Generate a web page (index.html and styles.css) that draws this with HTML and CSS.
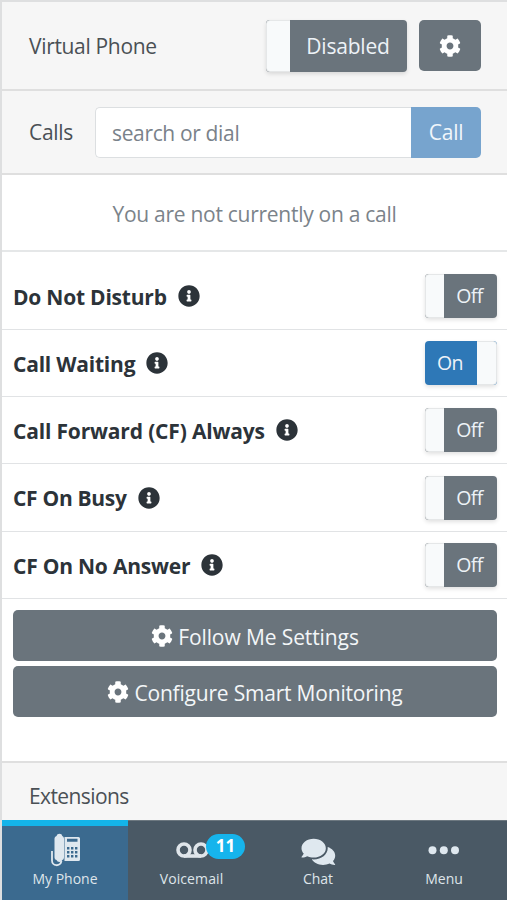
FILE: index.html
```html
<!DOCTYPE html>
<html lang="en">
<head>
<meta charset="utf-8">
<title>My Phone</title>
<link rel="stylesheet" href="styles.css">
</head>
<body>
<svg width="0" height="0" class="defs" aria-hidden="true">
  <symbol id="cog" viewBox="0 0 512 512"><path d="M487.4 315.7l-42.6-24.6c4.3-23.2 4.3-47 0-70.2l42.6-24.6c4.9-2.8 7.1-8.6 5.5-14-11.1-35.6-30-67.8-54.7-94.6-3.8-4.1-10-5.1-14.8-2.3L380.8 110c-17.9-15.4-38.5-27.3-60.8-35.1V25.8c0-5.6-3.9-10.5-9.4-11.7-36.7-8.2-74.3-7.8-109.2 0-5.5 1.2-9.4 6.1-9.4 11.7V75c-22.2 7.9-42.8 19.8-60.8 35.1L88.7 85.5c-4.9-2.8-11-1.9-14.8 2.3-24.7 26.7-43.6 58.9-54.7 94.6-1.7 5.4.6 11.2 5.5 14L67.3 221c-4.3 23.2-4.3 47 0 70.2l-42.6 24.6c-4.9 2.8-7.1 8.6-5.5 14 11.1 35.6 30 67.8 54.7 94.6 3.8 4.1 10 5.1 14.8 2.3l42.6-24.6c17.9 15.4 38.5 27.3 60.8 35.1v49.2c0 5.6 3.9 10.5 9.4 11.7 36.7 8.2 74.3 7.8 109.2 0 5.5-1.2 9.4-6.1 9.4-11.7v-49.2c22.2-7.9 42.8-19.8 60.8-35.1l42.6 24.6c4.9 2.8 11 1.9 14.8-2.3 24.7-26.7 43.6-58.9 54.7-94.6 1.5-5.5-.7-11.3-5.6-14.1zM256 336c-44.1 0-80-35.9-80-80s35.9-80 80-80 80 35.9 80 80-35.9 80-80 80z"/></symbol>
  <symbol id="info" viewBox="0 0 512 512"><path d="M256 8C119.043 8 8 119.083 8 256c0 136.997 111.043 248 248 248s248-111.003 248-248C504 119.083 392.957 8 256 8zm0 110c23.196 0 42 18.804 42 42s-18.804 42-42 42-42-18.804-42-42 18.804-42 42-42zm56 254c0 6.627-5.373 12-12 12h-88c-6.627 0-12-5.373-12-12v-24c0-6.627 5.373-12 12-12h12v-64h-12c-6.627 0-12-5.373-12-12v-24c0-6.627 5.373-12 12-12h64c6.627 0 12 5.373 12 12v100h12c6.627 0 12 5.373 12 12v24z"/></symbol>
</svg>
<main class="app">
  <header class="bar bar-phone">
    <span class="bar-title t-virtual">Virtual Phone</span>
    <button class="toggle toggle-lg"><span class="knob"></span><span class="state">Disabled</span></button>
    <button class="btn btn-gear" aria-label="Settings"><svg class="cog"><use href="#cog"/></svg></button>
  </header>
  <section class="bar bar-calls">
    <span class="bar-title t-calls">Calls</span>
    <div class="dial">
      <input class="dial-input" type="text" placeholder="search or dial">
      <button class="dial-btn">Call</button>
    </div>
  </section>
  <p class="status"><span>You are not currently on a call</span></p>
  <section class="settings">
    <div class="row first"><span class="label">Do Not Disturb</span><svg class="info"><use href="#info"/></svg><button class="toggle"><span class="knob"></span><span class="state">Off</span></button></div>
    <div class="row"><span class="label">Call Waiting</span><svg class="info"><use href="#info"/></svg><button class="toggle on"><span class="state">On</span><span class="knob"></span></button></div>
    <div class="row"><span class="label l-always">Call Forward (CF) Always</span><svg class="info"><use href="#info"/></svg><button class="toggle"><span class="knob"></span><span class="state">Off</span></button></div>
    <div class="row tall"><span class="label l-busy">CF On Busy</span><svg class="info"><use href="#info"/></svg><button class="toggle"><span class="knob"></span><span class="state">Off</span></button></div>
    <div class="row"><span class="label">CF On No Answer</span><svg class="info"><use href="#info"/></svg><button class="toggle"><span class="knob"></span><span class="state">Off</span></button></div>
  </section>
  <section class="actions">
    <button class="btn btn-wide"><svg class="cog"><use href="#cog"/></svg><span class="t-follow">Follow Me Settings</span></button>
    <button class="btn btn-wide"><svg class="cog"><use href="#cog"/></svg><span class="t-config">Configure Smart Monitoring</span></button>
  </section>
  <section class="bar bar-ext"><span class="bar-title t-ext">Extensions</span></section>
  <nav class="tabs">
    <a class="tab active">
      <svg class="tab-icon" viewBox="0 0 36 36"><g fill="#dfe8ef"><path fill-rule="evenodd" d="M17.500 4h14a1.500 1.500 0 0 1 1.500 1.500v21a1.500 1.500 0 0 1-1.500 1.500h-14zM20 5.800v3h10.500v-3zM20 14v2.400h2.400V14zm4 0v2.400h2.400V14zm4 0v2.400h2.400V14zM20 18v2.400h2.400V18zm4 0v2.400h2.400V18zm4 0v2.400h2.400V18zM20 22v2.400h2.400V22zm4 0v2.400h2.400V22zm4 0v2.400h2.400V22z"/><path d="M7.500 5.500q0-2 2-2.500q.5-2.300 3-2.300T15.300 3q1.700.5 1.700 2.500v19q0 2-1.700 2.500q-.5 2-2.800 2t-3-2q-2-.5-2-2.500z"/></g><path d="M5 18v9.500a4.700 4.700 0 0 0 9.300 1V28" fill="none" stroke="#dfe8ef" stroke-width="1.800"/></svg>
      <span class="tab-label">My Phone</span>
    </a>
    <a class="tab">
      <svg class="tab-icon" viewBox="0 0 36 36"><g fill="none" stroke="#dfe5ea" stroke-width="3.600"><circle cx="10" cy="17" r="6"/><circle cx="27" cy="17" r="6"/><path d="M10 23h17"/></g></svg>
      <span class="badge">11</span>
      <span class="tab-label t-vm">Voicemail</span>
    </a>
    <a class="tab">
      <svg class="tab-icon" viewBox="0 0 36 36"><path fill="#dfe8ef" transform="translate(1.500 4) scale(.0585)" d="M416 192c0-88.400-93.100-160-208-160S0 103.600 0 192c0 34.300 14.100 65.900 38 92-13.400 30.200-35.500 54.200-35.800 54.500-2.200 2.300-2.800 5.700-1.500 8.700S4.800 352 8 352c36.600 0 66.900-12.300 88.700-25 32.200 15.700 70.300 25 111.300 25 114.900 0 208-71.600 208-160zm122 220c23.900-26 38-57.700 38-92 0-66.900-53.500-124.200-129.300-148.100.9 6.600 1.300 13.300 1.300 20.100 0 105.900-107.700 192-240 192-10.800 0-21.300-.8-31.700-1.900C207.800 439.600 281.800 480 368 480c41 0 79.100-9.200 111.300-25 21.800 12.700 52.100 25 88.700 25 3.200 0 6.100-1.900 7.300-4.800 1.300-2.900.7-6.300-1.500-8.700-.3-.3-22.400-24.200-35.800-54.500z"/></svg>
      <span class="tab-label">Chat</span>
    </a>
    <a class="tab">
      <svg class="tab-icon" viewBox="0 0 36 36"><g fill="#dfe8ef"><circle cx="6.500" cy="17.200" r="4"/><circle cx="17.800" cy="17.200" r="4"/><circle cx="29" cy="17.200" r="4"/></g></svg>
      <span class="tab-label">Menu</span>
    </a>
  </nav>
</main>
</body>
</html>
```
FILE: styles.css
```css
* { box-sizing: border-box; }
body { margin: 0; font-family: "Open Sans", "Noto Sans", sans-serif; font-size: 21px; color: #4a5055; }
button { font: inherit; color: inherit; border: 0; padding: 0; margin: 0; }
span { white-space: nowrap; }
.defs { position: absolute; }
.app { width: 507px; height: 900px; display: flex; flex-direction: column; overflow: hidden; background: #fff; border-left: 2px solid #dedfe0; border-top: 2px solid #dedfe0; }
.bar { display: flex; align-items: center; background: #f6f6f6; padding: 0 26px 0 27px; border-bottom: 2px solid #dfdfdf; flex: none; }
.bar-phone { height: 89px; }
.bar-calls { height: 84px; }
.bar-ext { height: 59px; border-bottom: 0; border-top: 2px solid #dfdfdf; padding-top: 8px; }
.bar-title { letter-spacing: -.33px; }
.t-ext { letter-spacing: -.6px; }

.toggle { display: flex; width: 72px; height: 44px; margin-left: auto; border-radius: 4px; overflow: hidden; background: #6a747c; color: #edf2f7; font-size: 19.500px; box-shadow: 0 2px 4px rgba(0,0,0,.12); flex: none; }
.knob { width: 19px; background: #f8fafb; border: 1px solid #e5e7e8; border-right: 0; border-radius: 4px 0 0 4px; }
.state { flex: 1; align-self: center; text-align: center; letter-spacing: -.6px; padding-right: 2px; padding-bottom: 1px; }
.on { background: #2e78b7; }
.on .knob { width: 20px; border: 1px solid #e5e7e8; border-left: 0; border-radius: 0 4px 4px 0; }
.toggle-lg { width: 141px; height: 52px; font-size: 21px; }
.toggle-lg .state { letter-spacing: -.2px; padding-right: 1px; padding-bottom: 0; }
.toggle-lg .knob { width: 24px; }
.btn { display: flex; align-items: center; justify-content: center; background: #6a747c; color: #f3f6f8; border-radius: 5px; }
.btn-gear { width: 62px; height: 51px; margin-left: 12px; }
.cog { width: 22px; height: 22px; fill: #fff; flex: none; }

.dial { display: flex; width: 386px; height: 51px; margin-left: auto; }
.dial-input { flex: 1; min-width: 0; border: 1px solid #dcdfe1; border-right: 0; border-radius: 5px 0 0 5px; padding: 2px 16px 0; font: inherit; letter-spacing: -.35px; background: #fff; }
.dial-input::placeholder { color: #7a828a; opacity: 1; }
.dial-btn { width: 70px; background: #77a4ce; color: #f0f6fb; border-radius: 0 5px 5px 0; letter-spacing: -.2px; }

.status { margin: 0; height: 77px; display: flex; align-items: center; justify-content: center; border-bottom: 2px solid #e5e7e8; color: #7b838a; letter-spacing: -.28px; padding-top: 2px; flex: none; }

.row { height: 67px; display: flex; align-items: center; padding: 0 10px 0 11px; border-bottom: 1px solid #e1e3e5; }
.row.tall { height: 68px; }
.row.first { height: 78px; padding-top: 11px; }
.label { font-weight: 700; font-size: 21px; color: #2c3339; letter-spacing: -.22px; padding-top: 1px; }
.l-always { letter-spacing: -.17px; }
.l-busy { letter-spacing: -.3px; }
.info { width: 22px; height: 22px; margin-left: 11px; fill: #2c3339; }

.actions { padding: 11px 10px 0 11px; display: flex; flex-direction: column; gap: 5px; height: 162px; flex: none; }
.btn-wide { height: 51px; gap: 5px; }
.btn-wide span { padding-top: 2px; }
.t-follow { letter-spacing: -.1px; }
.t-config { letter-spacing: -.2px; }

.tabs { display: grid; grid-template-columns: 126px 127px 126px 126px; height: 80px; background: #4a5965; flex: none; width: 505px; }
.tab { position: relative; display: flex; flex-direction: column; align-items: center; padding-top: 12px; border-top: 1px solid #6d7880; color: #dfe5ea; font-size: 14px; }
.tab.active { background: #3b6a8f; border-top: 6px solid #14b4ea; padding-top: 7px; }
.tab-icon { width: 36px; height: 36px; }
.tab-label { line-height: 20px; }
.t-vm { letter-spacing: .1px; }
.badge { position: absolute; left: 78px; top: 13px; width: 39px; height: 25px; border-radius: 13px; background: #16b4ec; color: #fff; font-weight: 700; font-size: 17px; line-height: 24px; text-align: center; }
```
